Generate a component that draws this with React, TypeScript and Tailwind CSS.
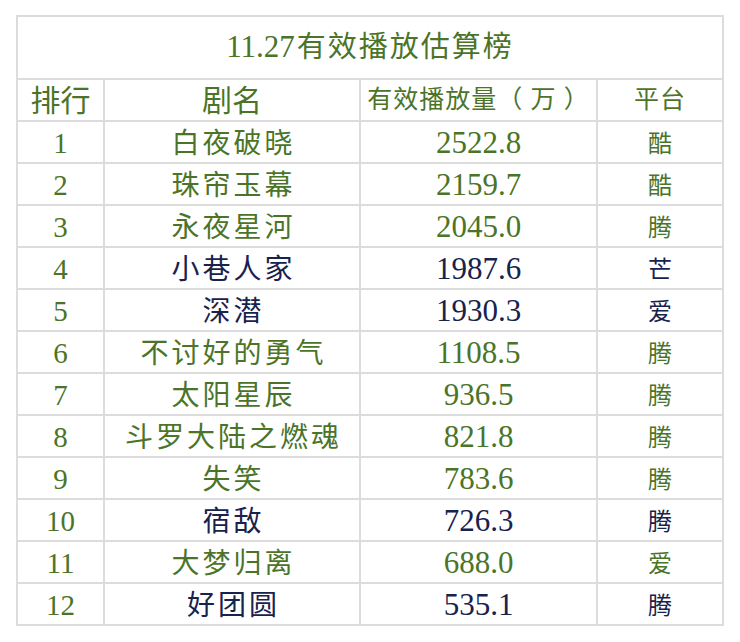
import React from 'react';

const G = 'text-[#4b7429]';
const N = 'text-[#17224d]';

interface Row {
  rank: number;
  name: string;
  value: string;
  platform: string;
  dark?: boolean;
}

const rows: Row[] = [
  { rank: 1, name: '白夜破晓', value: '2522.8', platform: '酷' },
  { rank: 2, name: '珠帘玉幕', value: '2159.7', platform: '酷' },
  { rank: 3, name: '永夜星河', value: '2045.0', platform: '腾' },
  { rank: 4, name: '小巷人家', value: '1987.6', platform: '芒', dark: true },
  { rank: 5, name: '深潜', value: '1930.3', platform: '爱', dark: true },
  { rank: 6, name: '不讨好的勇气', value: '1108.5', platform: '腾' },
  { rank: 7, name: '太阳星辰', value: '936.5', platform: '腾' },
  { rank: 8, name: '斗罗大陆之燃魂', value: '821.8', platform: '腾' },
  { rank: 9, name: '失笑', value: '783.6', platform: '腾' },
  { rank: 10, name: '宿敌', value: '726.3', platform: '腾', dark: true },
  { rank: 11, name: '大梦归离', value: '688.0', platform: '爱' },
  { rank: 12, name: '好团圆', value: '535.1', platform: '腾', dark: true },
];

const cell = 'bg-white h-[40px] flex items-center justify-center';

export default function App() {
  return (
    <div
      className="w-[740px] h-[642px] bg-white pt-[15px] pl-[16px]"
      style={{ fontFamily: '"Liberation Serif", "Noto Sans CJK SC", serif' }}
    >
      <div className="w-[708px] grid grid-cols-[85px_254px_235px_124px] gap-[2px] p-[2px] bg-[#dcdcdc]">
        <div className={`col-span-4 bg-white h-[61px] flex items-center justify-center text-[31px] ${G}`}>
          11.27<span className="pl-[2px] text-[29px] tracking-[2px]">有效播放估算榜</span>
        </div>

        {/* header */}
        <div className={`${cell} text-[30px] ${G}`}>排行</div>
        <div className={`${cell} text-[30px] ${G}`}>剧名</div>
        <div className={`${cell} text-[25px] tracking-[1px] ${G}`}>有效播放量（ 万 ）</div>
        <div className={`${cell} text-[25px] tracking-[1px] ${G}`}>平台</div>

        {rows.map((r) => {
          const c = r.dark ? N : G;
          return (
            <React.Fragment key={r.rank}>
              <div className={`${cell} pt-[3px] text-[29px] ${G}`}>{r.rank}</div>
              <div className={`${cell} pt-[3px] pl-[3px] text-[28px] tracking-[3px] ${c}`}>{r.name}</div>
              <div className={`${cell} pt-[3px] text-[31px] ${c}`}>{r.value}</div>
              <div className={`${cell} pt-[3px] text-[24px] ${c}`}>{r.platform}</div>
            </React.Fragment>
          );
        })}
      </div>
    </div>
  );
}
